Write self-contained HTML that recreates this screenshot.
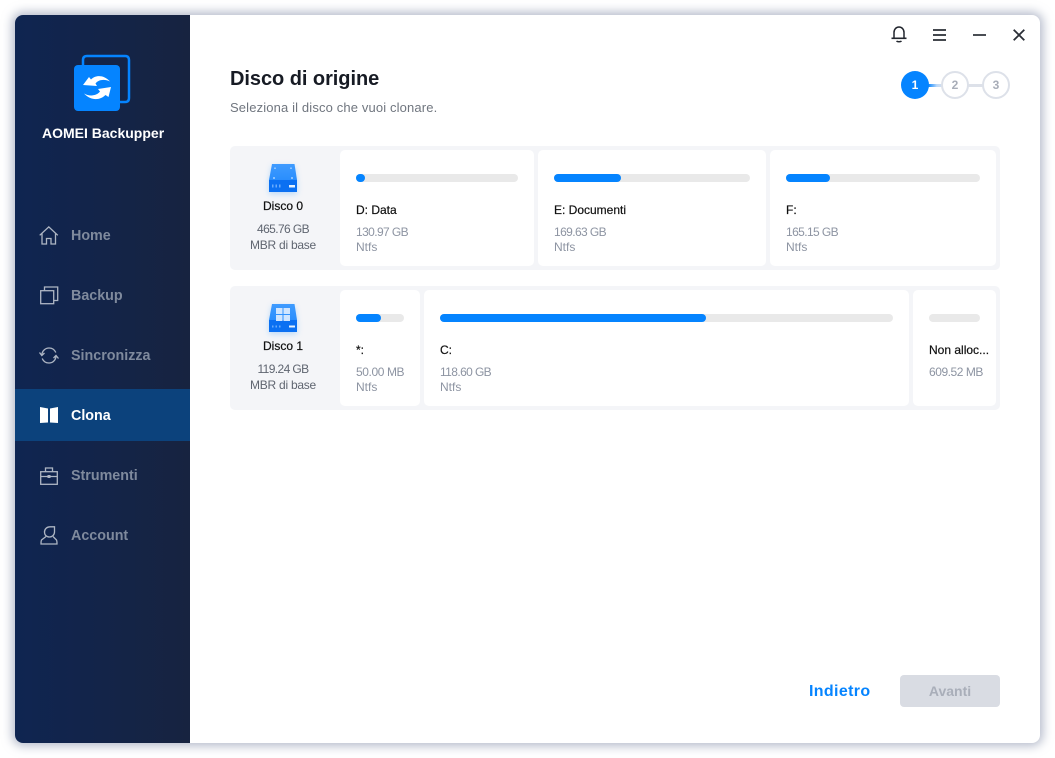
<!DOCTYPE html>
<html lang="it">
<head>
<meta charset="utf-8">
<title>AOMEI Backupper</title>
<style>
html,body{margin:0;padding:0;width:1055px;height:758px;overflow:hidden;background:#fff;font-family:"Liberation Sans",Arial,sans-serif}
*{box-sizing:border-box}
.a{position:absolute}
.t{position:absolute;white-space:nowrap;line-height:16px}
#win{left:15px;top:15px;width:1025px;height:728px;background:#fff;border-radius:8px;box-shadow:0 0 10px 3px rgba(120,132,160,.55)}
#side{left:15px;top:15px;width:175px;height:728px;background:linear-gradient(90deg,#0f2551,#172340);border-radius:8px 0 0 8px}
.nav{position:absolute;left:71px;font-size:14.3px;font-weight:bold;color:#7f8a9d;line-height:16px;white-space:nowrap}
.row{position:absolute;left:230px;width:770px;height:124px;background:#f4f5f8;border-radius:5px}
.card{position:absolute;background:#fff;border-radius:5px;height:116px}
.bar{position:absolute;height:8px;background:#e9e9e9;border-radius:4px}
.fill{position:absolute;height:8px;background:#0584ff;border-radius:4px}
.n{position:absolute;white-space:nowrap;font-size:12px;color:#111;line-height:14px;-webkit-text-stroke:.2px #111}
.g{position:absolute;white-space:nowrap;font-size:12px;color:#8d94a2;line-height:14px}
.s{letter-spacing:-.6px}
.d{position:absolute;white-space:nowrap;font-size:12px;color:#5f6570;line-height:14px;text-align:center;width:110px;left:228px}
svg{position:absolute;overflow:visible}
</style>
</head>
<body>
<div class="a" id="win"></div>
<div class="a" id="side"></div>

<!-- logo -->
<svg style="left:73px;top:54px" width="58" height="58" viewBox="0 0 58 58">
  <path d="M10 12V6Q10 2 14 2H52Q56 2 56 6V44Q56 48 52 48H46" fill="none" stroke="#0584ff" stroke-width="2.500"/>
  <rect x="1" y="11" width="46" height="46" rx="4" fill="#0584ff"/>
  <path d="M10 31L16 23L18 25.500C22 21.500 30 20 37 27.500C31 24.500 25 26 22.500 29.500L24 32Z" fill="#fff"/>
  <path d="M38 33L35.500 43L32.500 41C27 46.500 18 47 11 39.500C17 43 24 41.500 27 37.500L25 35Z" fill="#fff"/>
</svg>
<div class="t" style="left:42px;top:125px;font-size:14px;font-weight:bold;color:#fff">AOMEI Backupper</div>

<!-- nav -->
<div class="a" style="left:15px;top:389px;width:175px;height:52px;background:#0c427c"></div>

<svg style="left:39px;top:226px" width="20" height="20" viewBox="0 0 20 20" fill="none" stroke="#aeb6c4" stroke-width="1.300">
  <path d="M.7 9.300L9.800.9L18.800 9.300M3 7.500V18H7.500V12.500H12V18H16.500V7.500"/>
</svg>
<div class="nav" style="top:228px">Home</div>

<svg style="left:40px;top:286px" width="19" height="19" viewBox="0 0 19 19" fill="none" stroke="#aeb6c4" stroke-width="1.300">
  <rect x=".7" y="4.700" width="13" height="13"/>
  <path d="M4.500 4.500V1H17.700V14.500H14"/>
</svg>
<div class="nav" style="top:288px">Backup</div>

<svg style="left:39px;top:346px" width="20" height="19" viewBox="0 0 20 19" fill="none" stroke="#aeb6c4" stroke-width="1.300">
  <path d="M2.800 8.500C3.500 4.500 6.500 2 10 2C13 2 15.500 3.500 16.800 6.500"/>
  <path d="M17 10.500C16.500 14.500 13.500 17 10 17C7 17 4.500 15.500 3.200 12.500"/>
  <path d="M.5 6.500L2.800 9.500L5.500 7M19.500 12.500L17 9.500L14.500 12"/>
</svg>
<div class="nav" style="top:348px">Sincronizza</div>

<svg style="left:40px;top:407px" width="18" height="16" viewBox="0 0 18 16" fill="#fff">
  <path d="M0 0L8 1.500V15.500L0 16Z"/><path d="M18 0L10 1.500V15.500L18 16Z"/>
</svg>
<div class="nav" style="top:408px;color:#fff">Clona</div>

<svg style="left:40px;top:467px" width="18" height="18" viewBox="0 0 18 18" fill="none" stroke="#aeb6c4" stroke-width="1.300">
  <rect x=".7" y="4.700" width="16.600" height="12.600"/>
  <path d="M5.500 4.500V1H12.500V4.500M.7 9.500H17.300"/>
  <rect x="7.500" y="8" width="3" height="3" fill="#aeb6c4" stroke="none"/>
</svg>
<div class="nav" style="top:468px">Strumenti</div>

<svg style="left:40px;top:526px" width="18" height="19" viewBox="0 0 18 19" fill="none" stroke="#aeb6c4" stroke-width="1.300">
  <path d="M4.500 6C4.500 3 7 .8 10 .8H14.500V6C14.500 9 12 11 9.500 11C6.500 11 4.500 9 4.500 6Z"/>
  <path d="M6 10.500L1.500 14Q1 15 1 18H17Q17 15 16.500 14L13 10.500"/>
</svg>
<div class="nav" style="top:528px">Account</div>

<!-- window controls -->
<svg style="left:891px;top:26px" width="16" height="17" viewBox="0 0 16 17" fill="none" stroke="#22262e" stroke-width="1.500">
  <path d="M3 12V6.500C3 3.500 5 1 8 1C11 1 13 3.500 13 6.500V12"/>
  <path d="M.5 12.300H15.500" stroke-width="1.600"/>
  <path d="M5.500 15C6.500 16 9.500 16 10.500 15"/>
</svg>
<svg style="left:933px;top:29px" width="13" height="12" viewBox="0 0 13 12" stroke="#2a2e36" stroke-width="1.700">
  <path d="M0 1H13M0 6H13M0 11H13"/>
</svg>
<svg style="left:973px;top:34px" width="13" height="2" viewBox="0 0 13 2" stroke="#2a2e36" stroke-width="1.700">
  <path d="M0 1H13"/>
</svg>
<svg style="left:1013px;top:29px" width="12" height="12" viewBox="0 0 12 12" stroke="#2a2e36" stroke-width="1.800">
  <path d="M.7 .7L11.300 11.300M11.300 .7L.7 11.300"/>
</svg>

<!-- title -->
<div class="t" style="left:230px;top:68px;font-size:20px;line-height:22px;font-weight:bold;color:#171b24;letter-spacing:-.05px">Disco di origine</div>
<div class="t" style="left:230px;top:100px;font-size:13px;color:#70767f;letter-spacing:.14px">Seleziona il disco che vuoi clonare.</div>

<!-- steps -->
<div class="a" style="left:928px;top:84px;width:16px;height:3px;background:linear-gradient(90deg,#0584ff,#bcd8f8 55%,#dde1e9)"></div>
<div class="a" style="left:968px;top:84px;width:16px;height:3px;background:#dde1e9"></div>
<div class="a" style="left:901px;top:71px;width:28px;height:28px;border-radius:50%;background:#0584ff;color:#fff;font-size:12px;font-weight:bold;text-align:center;line-height:29px">1</div>
<div class="a" style="left:941px;top:71px;width:28px;height:28px;border-radius:50%;background:#fff;border:2px solid #dde1e9;color:#a8adb8;font-size:12px;font-weight:bold;text-align:center;line-height:25px">2</div>
<div class="a" style="left:982px;top:71px;width:28px;height:28px;border-radius:50%;background:#fff;border:2px solid #dde1e9;color:#a8adb8;font-size:12px;font-weight:bold;text-align:center;line-height:25px">3</div>

<!-- row 1 -->
<div class="row" style="top:146px"></div>
<div class="card" style="left:340px;top:150px;width:194px"></div>
<div class="card" style="left:538px;top:150px;width:228px"></div>
<div class="card" style="left:770px;top:150px;width:226px"></div>

<svg style="left:268px;top:164px;filter:drop-shadow(0 2px 3px rgba(5,132,255,.25))" width="30" height="30" viewBox="0 0 30 30">
  <defs>
    <linearGradient id="dg" x1="0" y1="0" x2="0" y2="1"><stop offset="0" stop-color="#3f9bff"/><stop offset="1" stop-color="#1a84fb"/></linearGradient>
  </defs>
  <path d="M4 0H26.500L29 16V28H1V16Z" fill="url(#dg)"/>
  <path d="M1 16H29V28H1Z" fill="#0b70f2"/>
  <path d="M6 3.500h2v1.500h-2zM22 3.500h2v1.500h-2zM5 13h2v2h-2zM23 13h2v2h-2z" fill="#a8d2ff" opacity=".75"/>
  <path d="M4 20.500h1.500v3h-1.500zM7.500 20.500h1.500v3h-1.500zM11 20.500h1.500v3h-1.500z" fill="#7fbaff" opacity=".8"/>
  <rect x="21" y="21" width="6" height="2.500" fill="#e6f2ff"/>
</svg>
<div class="d" style="top:199px;color:#111;-webkit-text-stroke:.2px #111">Disco 0</div>
<div class="d s" style="top:222px">465.76 GB</div>
<div class="d" style="top:238px;letter-spacing:-.25px">MBR di base</div>

<div class="bar" style="left:356px;top:174px;width:162px"></div>
<div class="fill" style="left:356px;top:174px;width:9px"></div>
<div class="n" style="left:356px;top:203px">D: Data</div>
<div class="g s" style="left:356px;top:225px">130.97 GB</div>
<div class="g" style="left:356px;top:240px">Ntfs</div>

<div class="bar" style="left:554px;top:174px;width:196px"></div>
<div class="fill" style="left:554px;top:174px;width:67px"></div>
<div class="n" style="left:554px;top:203px">E: Documenti</div>
<div class="g s" style="left:554px;top:225px">169.63 GB</div>
<div class="g" style="left:554px;top:240px">Ntfs</div>

<div class="bar" style="left:786px;top:174px;width:194px"></div>
<div class="fill" style="left:786px;top:174px;width:44px"></div>
<div class="n" style="left:786px;top:203px">F:</div>
<div class="g s" style="left:786px;top:225px">165.15 GB</div>
<div class="g" style="left:786px;top:240px">Ntfs</div>

<!-- row 2 -->
<div class="row" style="top:286px"></div>
<div class="card" style="left:340px;top:290px;width:80px"></div>
<div class="card" style="left:424px;top:290px;width:485px"></div>
<div class="card" style="left:913px;top:290px;width:83px"></div>

<svg style="left:268px;top:304px;filter:drop-shadow(0 2px 3px rgba(5,132,255,.25))" width="30" height="30" viewBox="0 0 30 30">
  <path d="M4 0H26.500L29 16V28H1V16Z" fill="url(#dg)"/>
  <path d="M1 16H29V28H1Z" fill="#0b70f2"/>
  <path d="M8 4h6.500v6h-6.500zM15.500 4h6.500v6h-6.500zM8 11h6.500v6h-6.500zM15.500 11h6.500v6h-6.500z" fill="#cfe5ff"/>
  <path d="M4 21.500h1.500v2h-1.500zM7.500 21.500h1.500v2h-1.500zM11 21.500h1.500v2h-1.500z" fill="#7fbaff" opacity=".8"/>
  <rect x="21" y="21.500" width="6" height="2" fill="#e6f2ff"/>
</svg>
<div class="d" style="top:339px;color:#111;-webkit-text-stroke:.2px #111">Disco 1</div>
<div class="d s" style="top:362px">119.24 GB</div>
<div class="d" style="top:378px;letter-spacing:-.25px">MBR di base</div>

<div class="bar" style="left:356px;top:314px;width:48px"></div>
<div class="fill" style="left:356px;top:314px;width:25px"></div>
<div class="n" style="left:356px;top:343px">*:</div>
<div class="g" style="left:356px;top:365px;letter-spacing:-.4px">50.00 MB</div>
<div class="g" style="left:356px;top:380px">Ntfs</div>

<div class="bar" style="left:440px;top:314px;width:453px"></div>
<div class="fill" style="left:440px;top:314px;width:266px"></div>
<div class="n" style="left:440px;top:343px">C:</div>
<div class="g s" style="left:440px;top:365px">118.60 GB</div>
<div class="g" style="left:440px;top:380px">Ntfs</div>

<div class="bar" style="left:929px;top:314px;width:51px"></div>
<div class="n" style="left:929px;top:343px">Non alloc...</div>
<div class="g" style="left:929px;top:365px;letter-spacing:-.45px">609.52 MB</div>

<!-- footer -->
<div class="t" style="left:809px;top:684px;font-size:16px;font-weight:bold;color:#0584ff;letter-spacing:.35px">Indietro</div>
<div class="a" style="left:900px;top:675px;width:100px;height:32px;background:#d9dce3;border-radius:4px;color:#a9aeb9;font-size:14px;font-weight:bold;text-align:center;line-height:33px">Avanti</div>
</body>
</html>
